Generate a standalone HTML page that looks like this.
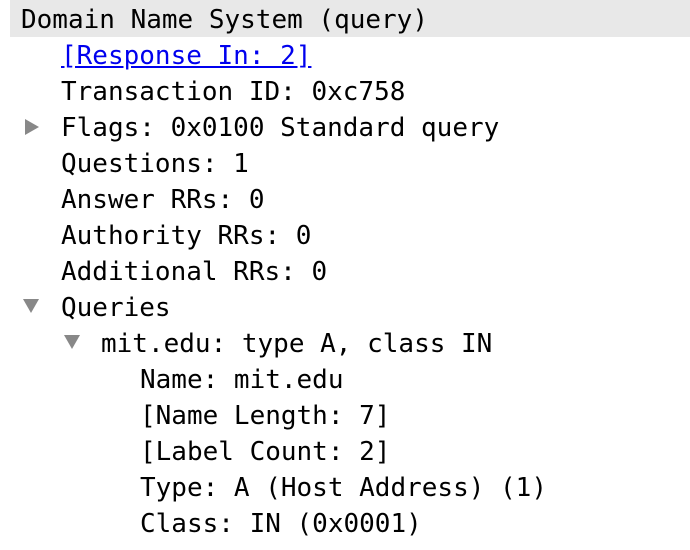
<!DOCTYPE html>
<html><head><style>
body{margin:0;width:690px;height:550px;background:#fff;overflow:hidden;font-family:"DejaVu Sans Mono","Liberation Mono",monospace;font-size:26px;color:#000}
.l{position:absolute;height:36px;line-height:36px;white-space:pre;margin-top:2px}
.hd{position:absolute;left:10px;top:0;width:680px;height:37px;background:#e8e8e8}
a{color:#0000ee;text-decoration:underline}
.tr{position:absolute;width:0;height:0}
.r{border-top:8px solid transparent;border-bottom:8px solid transparent;border-left:14px solid #888}
.d{border-left:8px solid transparent;border-right:8px solid transparent;border-top:14px solid #888}
</style></head><body>
<div class="hd"></div>
<div class="l" style="left:21px;top:0">Domain Name System (query)</div>
<div class="l" style="left:61px;top:36px"><a>[Response In: 2]</a></div>
<div class="l" style="left:61px;top:72px">Transaction ID: 0xc758</div>
<div class="tr r" style="left:25px;top:119px"></div>
<div class="l" style="left:61px;top:108px">Flags: 0x0100 Standard query</div>
<div class="l" style="left:61px;top:144px">Questions: 1</div>
<div class="l" style="left:61px;top:180px">Answer RRs: 0</div>
<div class="l" style="left:61px;top:216px">Authority RRs: 0</div>
<div class="l" style="left:61px;top:252px">Additional RRs: 0</div>
<div class="tr d" style="left:23px;top:299px"></div>
<div class="l" style="left:61px;top:288px">Queries</div>
<div class="tr d" style="left:64px;top:335px"></div>
<div class="l" style="left:101px;top:324px">mit.edu: type A, class IN</div>
<div class="l" style="left:140px;top:360px">Name: mit.edu</div>
<div class="l" style="left:140px;top:396px">[Name Length: 7]</div>
<div class="l" style="left:140px;top:432px">[Label Count: 2]</div>
<div class="l" style="left:140px;top:468px">Type: A (Host Address) (1)</div>
<div class="l" style="left:140px;top:504px">Class: IN (0x0001)</div>
</body></html>
